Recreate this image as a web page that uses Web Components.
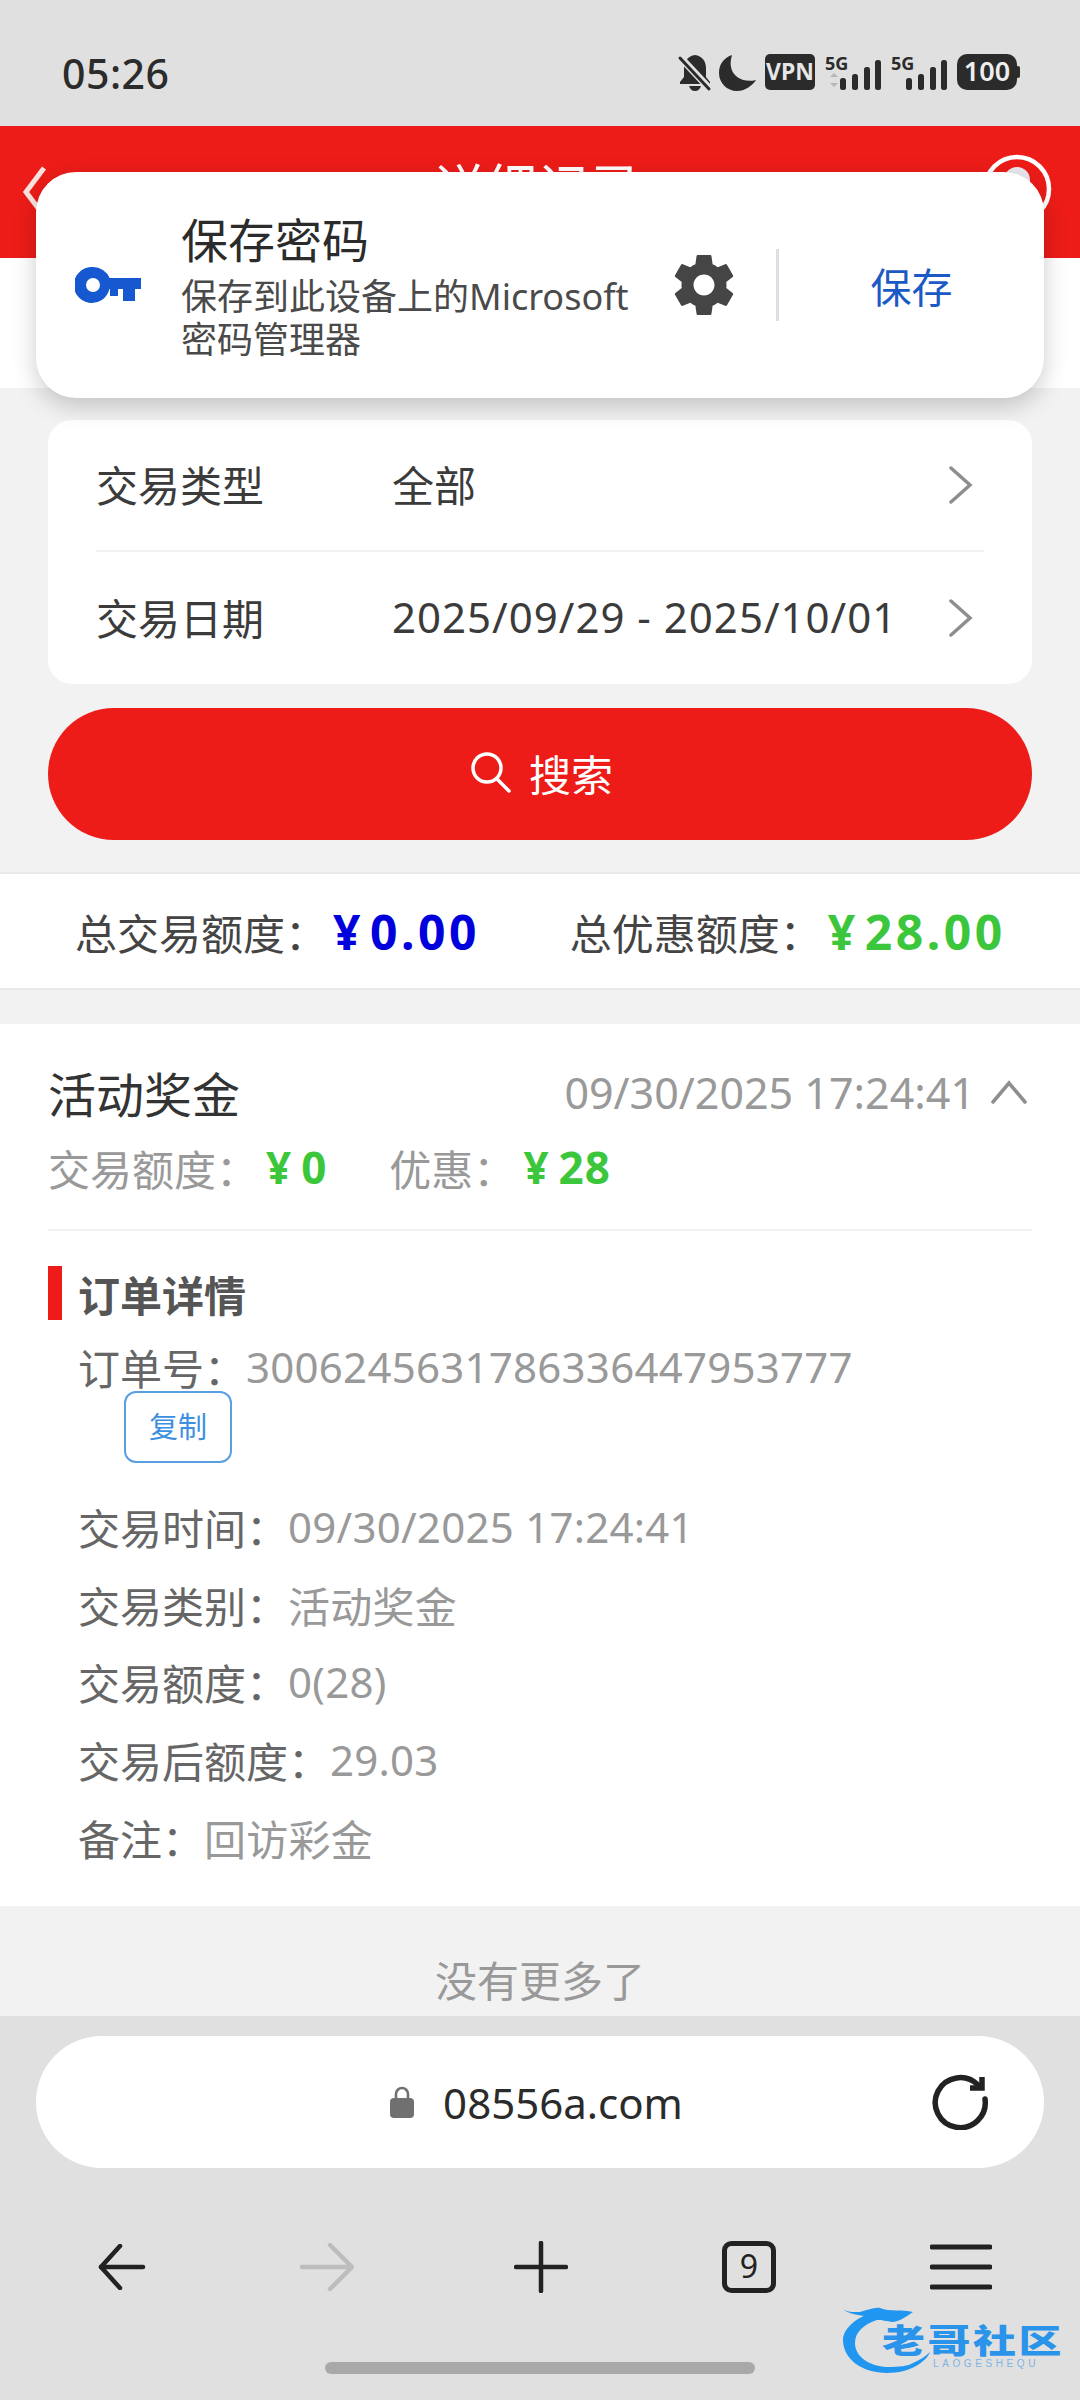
<!DOCTYPE html>
<html lang="zh">
<head>
<meta charset="UTF-8">
<title>交易记录</title>
<style>
  html, body { margin: 0; padding: 0; }
  body {
    width: 1080px; height: 2400px; overflow: hidden; position: relative;
    background: #f2f2f2;
    font-family: "Noto Sans", "Noto Sans CJK SC", sans-serif;
    display: flex; flex-direction: column;
  }
</style>
</head>
<body>
  <status-bar time="05:26"></status-bar>
  <app-header title="详细记录"></app-header>
  <tab-strip></tab-strip>

  <filter-card>
    <filter-row label="交易类型" value="全部"></filter-row>
    <filter-row label="交易日期" value="2025/09/29 - 2025/10/01" spaced></filter-row>
  </filter-card>
  <search-button>搜索</search-button>

  <summary-bar>
    <summary-item label="总交易额度：" amount="0.00" color="#0000dc"></summary-item>
    <summary-item label="总优惠额度：" amount="28.00" color="#3cc63c"></summary-item>
  </summary-bar>

  <record-card name="活动奖金" time="09/30/2025 17:24:41" amount="0" bonus="28">
    <detail-row label="订单号：">3006245631786336447953777</detail-row>
    <copy-button>复制</copy-button>
    <detail-row label="交易时间：" style="margin-top:25px">09/30/2025 17:24:41</detail-row>
    <detail-row label="交易类别：">活动奖金</detail-row>
    <detail-row label="交易额度：">0(28)</detail-row>
    <detail-row label="交易后额度：">29.03</detail-row>
    <detail-row label="备注：">回访彩金</detail-row>
  </record-card>

  <no-more>没有更多了</no-more>
  <browser-bar url="08556a.com" tabs="9"></browser-bar>

  <save-password></save-password>
  <water-mark></water-mark>

<script>
  const FONT = `"Noto Sans", "Noto Sans CJK SC", sans-serif`

  class BaseElement extends HTMLElement {
    constructor(){
      super()
      this.attachShadow({mode:"open"})
    }
    connectedCallback(){
      this.shadowRoot.innerHTML = this.render()
    }
    attr(name){
      return this.getAttribute(name) || ""
    }
  }

  class StatusBar extends BaseElement {
    render(){
      return `
      <style>
        :host { display:flex; align-items:center; justify-content:space-between; box-sizing:border-box; height:126px; background:#e0e0e0; padding:20px 60px 0 62px; color:#2b2b2b; flex:none; font-family:${FONT}; }
        .time { font-size:41px; font-weight:500; letter-spacing:.5px; }
        .icons { display:flex; align-items:center; }
        svg { overflow:visible; }
      </style>
      <span class="time">${this.attr("time")}</span>
      <div class="icons">
        <svg width="340" height="40" viewBox="0 0 340 40" fill="#2b2b2b">
          <!-- bell with slash -->
          <path d="M15 2c-7 1-11 6-11 13v9l-4 5v2h30v-2l-4-5v-9c0-7-4-12-11-13z"/>
          <path d="M9 33h12c-1 3-3 5-6 5s-5-2-6-5z"/>
          <path d="M-1 3 L30 36" stroke="#e0e0e0" stroke-width="7"/>
          <path d="M0 5 L29 36" stroke="#2b2b2b" stroke-width="3" stroke-linecap="round"/>
          <!-- moon -->
          <path d="M52 2c-9 3-13 10-13 18 0 10 8 18 18 18 8 0 15-5 19-11-11 3-23-2-25-13-1-4 0-8 1-12z"/>
          <!-- vpn -->
          <rect x="85" y="1" width="50" height="36" rx="5"/>
          <text x="110" y="27" text-anchor="middle" font-size="23" font-weight="700" fill="#e6e6e6" font-family="Noto Sans, sans-serif">VPN</text>
          <!-- sim 1 -->
          <text x="145" y="17" font-size="18" font-weight="700" font-family="Noto Sans, sans-serif">5G</text>
          <path d="M150 24l4-4 4 4zM150 30l4 4 4-4z" fill="#b5b5b5"/>
          <rect x="160" y="25" width="6" height="12" rx="2.5"/>
          <rect x="172" y="21" width="6" height="16" rx="2.5"/>
          <rect x="184" y="14" width="6" height="23" rx="2.5"/>
          <rect x="195" y="7" width="6" height="30" rx="2.5"/>
          <!-- sim 2 -->
          <text x="211" y="17" font-size="18" font-weight="700" font-family="Noto Sans, sans-serif">5G</text>
          <rect x="226" y="25" width="6" height="12" rx="2.5"/>
          <rect x="238" y="21" width="6" height="16" rx="2.5"/>
          <rect x="250" y="14" width="6" height="23" rx="2.5"/>
          <rect x="261" y="7" width="6" height="30" rx="2.5"/>
          <!-- battery -->
          <rect x="277" y="1" width="60" height="36" rx="10"/>
          <rect x="336" y="13" width="4" height="12" rx="2"/>
          <text x="307" y="28" text-anchor="middle" font-size="27" font-weight="600" fill="#eee" font-family="Noto Sans, sans-serif">100</text>
        </svg>
      </div>`
    }
  }

  class AppHeader extends BaseElement {
    render(){
      return `
      <style>
        :host { display:flex; align-items:center; justify-content:space-between; box-sizing:border-box; height:132px; background:#ed1c18; padding:0 28px 0 20px; flex:none; color:#fff; font-family:${FONT}; }
        .title { font-size:52px; line-height:60px; margin:0 0 8px 36px; }
        svg { display:block; }
        .user { margin-bottom:6px; }
      </style>
      <svg width="36" height="60" viewBox="0 0 36 60" fill="none" stroke="#fbe3e0" stroke-width="5"><path d="M24 6 L6 30 L24 54"/></svg>
      <span class="title">${this.attr("title")}</span>
      <svg class="user" width="70" height="70" viewBox="0 0 70 70" fill="none"><circle cx="35" cy="35" r="32" stroke="#fff" stroke-width="4.5"/><circle cx="35" cy="26" r="13" fill="#e8e8ee"/></svg>`
    }
  }

  class TabStrip extends BaseElement {
    render(){
      return `<style>:host { display:block; height:130px; background:#fff; flex:none; }</style>`
    }
  }

  class FilterCard extends BaseElement {
    render(){
      return `
      <style>
        :host { display:block; box-sizing:border-box; margin:32px 48px 0; height:264px; background:#fff; border-radius:24px; padding:0 48px; flex:none; }
        ::slotted(filter-row:first-child) { border-bottom:2px solid #f1f1f1; }
      </style>
      <slot></slot>`
    }
  }

  class FilterRow extends BaseElement {
    render(){
      return `
      <style>
        :host { display:flex; align-items:center; box-sizing:border-box; height:132px; color:#3b3b3b; font-size:42px; font-family:${FONT}; }
        .label { width:296px; flex:none; padding-bottom:4px; }
        .value { flex:1; padding-bottom:4px; letter-spacing:${this.hasAttribute("spaced") ? "1px" : "0"}; }
        svg { flex:none; margin-right:11px; }
      </style>
      <span class="label">${this.attr("label")}</span>
      <span class="value">${this.attr("value")}</span>
      <svg width="24" height="38" viewBox="0 0 24 38" fill="none" stroke="#8e8e8e" stroke-width="3.5" stroke-linecap="round"><path d="M2 2 L21 19 L2 36"/></svg>`
    }
  }

  class SearchButton extends BaseElement {
    render(){
      return `
      <style>
        :host { display:flex; align-items:center; justify-content:center; gap:18px; box-sizing:border-box; height:132px; margin:24px 48px 0; background:#ed1c18; border-radius:66px; color:#fff; font-size:42px; flex:none; font-family:${FONT}; padding:0 0 4px 4px; }
        svg { display:block; }
      </style>
      <svg width="40" height="42" viewBox="0 0 40 42" fill="none" stroke="#fff" stroke-width="3.5" stroke-linecap="round"><circle cx="16" cy="17" r="14"/><path d="M26 28 L38 40"/></svg>
      <slot></slot>`
    }
  }

  class SummaryBar extends BaseElement {
    render(){
      return `
      <style>
        :host { display:flex; align-items:center; gap:90px; box-sizing:border-box; height:118px; margin-top:32px; padding:0 0 0 75px; background:#fff; border-top:2px solid #e9e9e9; border-bottom:2px solid #e9e9e9; flex:none; }
      </style>
      <slot></slot>`
    }
  }

  class SummaryItem extends BaseElement {
    render(){
      return `
      <style>
        :host { display:flex; align-items:center; color:#444; font-size:42px; font-family:${FONT}; white-space:nowrap; }
        b { font-size:48px; font-weight:700; margin-left:6px; letter-spacing:3.5px; color:${this.attr("color")}; }
        i { font-style:normal; margin-right:6px; }
      </style>
      <span>${this.attr("label")}</span><b><i>¥</i>${this.attr("amount")}</b>`
    }
  }

  class RecordCard extends BaseElement {
    render(){
      return `
      <style>
        :host { display:block; box-sizing:border-box; height:882px; margin-top:34px; padding:0 48px; background:#fff; flex:none; font-family:${FONT}; }
        .head { display:flex; align-items:center; justify-content:space-between; height:136px; }
        .name { font-size:48px; color:#333; }
        .right { display:flex; align-items:center; gap:16px; color:#999; font-size:43px; margin-right:5px; }
        .sum { display:flex; align-items:center; height:52px; margin-top:-19px; color:#999; font-size:42px; }
        .sum b { color:#3cc63c; font-size:44px; letter-spacing:1px; margin:0 62px 0 8px; }
        .sum i { font-style:normal; margin-right:9px; }
        .line { height:2px; background:#f0f0f0; margin-top:36px; }
        .section { display:flex; align-items:center; height:54px; margin-top:35px; font-size:42px; font-weight:700; color:#555; }
        .section i { display:block; width:14px; height:54px; background:#ed1c18; margin-right:16px; }
        .rows { padding:0 0 0 30px; margin-top:8px; }
      </style>
      <div class="head">
        <span class="name">${this.attr("name")}</span>
        <span class="right">${this.attr("time")}
          <svg width="36" height="24" viewBox="0 0 36 24" fill="none" stroke="#8e8e8e" stroke-width="3.5" stroke-linecap="round"><path d="M2 22 L18 3 L34 22"/></svg>
        </span>
      </div>
      <div class="sum">交易额度：<b><i>¥</i>${this.attr("amount")}</b>优惠：<b><i>¥</i>${this.attr("bonus")}</b></div>
      <div class="line"></div>
      <div class="section"><i></i>订单详情</div>
      <div class="rows"><slot></slot></div>`
    }
  }

  class DetailRow extends BaseElement {
    render(){
      return `
      <style>
        :host { display:flex; align-items:center; height:77.7px; color:#999; font-size:42px; font-family:${FONT}; }
        .label { color:#666; }
        .val { letter-spacing:.25px; }
      </style>
      <span class="label">${this.attr("label")}</span><span class="val"><slot></slot></span>`
    }
  }

  class CopyButton extends BaseElement {
    render(){
      return `
      <style>
        :host { display:flex; align-items:center; justify-content:center; box-sizing:border-box; width:108px; height:72px; margin:-15px 0 0 46px; padding-bottom:3px; border:2px solid #5a9fe0; border-radius:12px; color:#3d8fe0; font-size:29px; font-family:${FONT}; }
      </style>
      <slot></slot>`
    }
  }

  class NoMore extends BaseElement {
    render(){
      return `
      <style>
        :host { display:flex; align-items:center; justify-content:center; box-sizing:border-box; height:110px; padding-top:34px; color:#999; font-size:42px; flex:none; font-family:${FONT}; }
      </style>
      <slot></slot>`
    }
  }

  class BrowserBar extends BaseElement {
    render(){
      return `
      <style>
        :host { display:block; box-sizing:border-box; flex:1; background:#e0e0e0; padding:20px 36px 0; font-family:${FONT}; position:relative; }
        .url { display:flex; align-items:center; justify-content:center; position:relative; height:132px; background:#fff; border-radius:66px; color:#2b2b2b; font-size:42px; gap:28px; padding-right:8px; box-sizing:border-box; }
        .reload { position:absolute; right:54px; top:38px; }
        .nav { display:flex; align-items:center; justify-content:space-between; margin:69px 0 0; padding:0 52px 0 62px; height:60px; }
        .nav svg { display:block; }
        .nav svg:nth-child(3) { margin-left:6px; }
        .pill { width:430px; height:12px; border-radius:6px; background:#a9a9a9; margin:65px auto 0; }
      </style>
      <div class="url">
        <svg width="26" height="32" viewBox="0 0 26 32"><path d="M7 14V8a6 6 0 0 1 12 0v6" fill="none" stroke="#707070" stroke-width="2.6"/><rect x="1" y="12" width="24" height="20" rx="4" fill="#707070"/></svg>
        <span>${this.attr("url")}</span>
        <svg class="reload" width="58" height="56" viewBox="0 0 58 56" fill="none" stroke="#222" stroke-width="5.5" stroke-linecap="round"><path d="M53 25 A25 25 0 1 1 46 11"/><path d="M38 14 H50 V3" stroke-linecap="butt" stroke-linejoin="miter"/></svg>
      </div>
      <div class="nav">
        <svg width="48" height="46" viewBox="0 0 48 46" fill="none" stroke="#222" stroke-width="4.5" stroke-linecap="round" stroke-linejoin="round"><path d="M22 2 L3 23 L22 44"/><path d="M3 23 H45"/></svg>
        <svg width="54" height="48" viewBox="0 0 54 48" fill="none" stroke="#bdbdbd" stroke-width="4.5" stroke-linecap="round" stroke-linejoin="round"><path d="M30 2 L52 24 L30 46"/><path d="M2 24 H51"/></svg>
        <svg width="54" height="52" viewBox="0 0 54 52" fill="none" stroke="#222" stroke-width="4.5" stroke-linecap="round"><path d="M27 2 V50"/><path d="M2 26 H52"/></svg>
        <svg width="54" height="52" viewBox="0 0 54 52" fill="none"><rect x="2.5" y="2.5" width="49" height="47" rx="7" stroke="#222" stroke-width="5"/><text x="27" y="37" text-anchor="middle" font-size="32" fill="#222" stroke="none" font-family="Noto Sans, sans-serif">${this.attr("tabs")}</text></svg>
        <svg width="62" height="46" viewBox="0 0 62 46" fill="none" stroke="#222" stroke-width="5" stroke-linecap="round"><path d="M2 3 H60"/><path d="M2 23 H60"/><path d="M2 43 H60"/></svg>
      </div>
      <div class="pill"></div>`
    }
  }

  class SavePassword extends BaseElement {
    render(){
      return `
      <style>
        :host { position:absolute; left:36px; top:172px; width:1008px; height:226px; box-sizing:border-box; display:flex; align-items:center; background:#fff; border-radius:40px; box-shadow:0 8px 24px rgba(0,0,0,.2); font-family:${FONT}; }
        .key { margin-left:39px; flex:none; display:block; }
        .text { width:470px; margin-left:40px; }
        .t { font-family:"Liberation Sans","Noto Sans CJK SC",sans-serif; font-size:47px; line-height:60px; color:#2b2b2b; padding-top:3px; }
        .s { font-size:36px; line-height:43px; color:#4a4a4a; margin-top:3px; }
        .gear { flex:none; margin-left:23px; display:block; }
        .sep { width:3px; height:72px; background:#dcdfe4; margin-left:42px; flex:none; }
        .save { flex:1; text-align:center; color:#1b59c4; font-size:41px; }
      </style>
      <svg class="key" width="66" height="36" viewBox="0 0 66 36"><path fill="#1558d0" fill-rule="evenodd" d="M18 0a18 18 0 0 1 16.6 11H66v11h-6v12H48V22h-5v7H35v-7h-.6A18 18 0 1 1 18 0zm0 11a7 7 0 1 0 0 14 7 7 0 0 0 0-14z"/></svg>
      <div class="text">
        <div class="t">保存密码</div>
        <div class="s">保存到此设备上的Microsoft<br>密码管理器</div>
      </div>
      <svg class="gear" width="60" height="60" viewBox="2 2 20 20"><path fill="#454545" d="M19.43 12.98c.04-.32.07-.64.07-.98s-.03-.66-.07-.98l2.11-1.65c.19-.15.24-.42.12-.64l-2-3.46c-.12-.22-.39-.3-.61-.22l-2.49 1c-.52-.4-1.08-.73-1.69-.98l-.38-2.65C14.46 2.18 14.25 2 14 2h-4c-.25 0-.46.18-.49.42l-.38 2.65c-.61.25-1.17.59-1.69.98l-2.49-1c-.23-.09-.49 0-.61.22l-2 3.46c-.13.22-.07.49.12.64l2.11 1.65c-.04.32-.07.65-.07.98s.03.66.07.98l-2.11 1.65c-.19.15-.24.42-.12.64l2 3.46c.12.22.39.3.61.22l2.49-1c.52.4 1.08.73 1.69.98l.38 2.65c.03.24.24.42.49.42h4c.25 0 .46-.18.49-.42l.38-2.65c.61-.25 1.17-.59 1.69-.98l2.49 1c.23.09.49 0 .61-.22l2-3.46c.12-.22.07-.49-.12-.64l-2.11-1.65zM12 15.5c-1.93 0-3.5-1.57-3.5-3.5s1.57-3.5 3.5-3.5 3.5 1.57 3.5 3.5-1.57 3.5-3.5 3.5z"/></svg>
      <div class="sep"></div>
      <div class="save">保存</div>`
    }
  }

  class WaterMark extends BaseElement {
    render(){
      return `
      <style>
        :host { position:absolute; left:840px; top:2304px; width:226px; height:74px; }
        svg { position:absolute; left:0; top:0; }
        .cn { position:absolute; left:42px; top:21px; font-family:"Liberation Sans","Noto Sans CJK SC",sans-serif; font-size:33px; line-height:33px; font-weight:900; letter-spacing:2px; color:#2a93ea; white-space:nowrap; transform:scaleX(1.3); transform-origin:left center; }
        .en { position:absolute; left:93px; top:55px; font-family:"Liberation Sans",sans-serif; font-size:10px; line-height:10px; letter-spacing:3.6px; color:#7fb4e2; white-space:nowrap; }
      </style>
      <svg width="226" height="74" viewBox="0 0 226 74">
        <path fill="#2196f0" d="M2 5 C10 9 14 8 20 8 C28 6 34 3 40 4 C50 8 62 5 73 8 C66 13 60 17 53 18 C46 17 42 16 37 16 C24 20 15 28 15 39 C15 52 28 62 47 63 C60 63 68 62 73 59 C80 56 86 52 90 48 C86 58 70 69 47 69 C22 69 3 55 3 36 C3 26 14 16 24 12 C16 11 8 9 2 5 Z"/>
      </svg>
      <span class="cn">老哥社区</span>
      <span class="en">LAOGESHEQU</span>`
    }
  }

  customElements.define("status-bar", StatusBar)
  customElements.define("app-header", AppHeader)
  customElements.define("tab-strip", TabStrip)
  customElements.define("filter-card", FilterCard)
  customElements.define("filter-row", FilterRow)
  customElements.define("search-button", SearchButton)
  customElements.define("summary-bar", SummaryBar)
  customElements.define("summary-item", SummaryItem)
  customElements.define("record-card", RecordCard)
  customElements.define("detail-row", DetailRow)
  customElements.define("copy-button", CopyButton)
  customElements.define("no-more", NoMore)
  customElements.define("browser-bar", BrowserBar)
  customElements.define("save-password", SavePassword)
  customElements.define("water-mark", WaterMark)
</script>
</body>
</html>
